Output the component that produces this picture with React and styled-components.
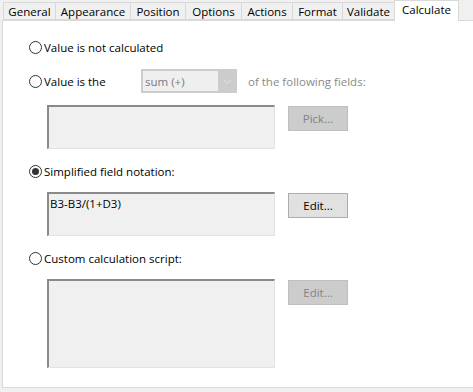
import React from 'react'
import styled, { createGlobalStyle } from 'styled-components'

const GlobalStyle = createGlobalStyle`
    html, body {
        margin: 0;
        padding: 0;
        background: #f0f0f0;
    }
    body {
        font-family: "Open Sans", "Noto Sans", sans-serif;
        font-size: 11.5px;
        color: #000;
    }
`;

const Window = styled.div`
    width: 473px;
    height: 392px;
    background: #f0f0f0;
    overflow: hidden;
`;

const TabBar = styled.div`
    display: flex;
    align-items: flex-end;
    height: 20px;
    padding-left: 3px;
    position: relative;
    z-index: 1;
`;

const Tab = styled.div`
    box-sizing: border-box;
    width: ${p => p.w}px;
    height: ${p => (p.active ? 21 : 18)}px;
    margin-left: -1px;
    margin-bottom: ${p => (p.active ? -1 : 0)}px;
    border: 1px solid #d9d9d9;
    border-bottom: ${p => (p.active ? 'none' : '1px solid #d9d9d9')};
    background: ${p => (p.active ? '#fff' : '#f0f0f0')};
    display: flex;
    justify-content: center;
    align-items: ${p => (p.active ? 'flex-start' : 'center')};
    padding-top: ${p => (p.active ? 1 : 0)}px;
    white-space: nowrap;
    &:first-child { margin-left: 0; }
`;

const Panel = styled.div`
    box-sizing: border-box;
    margin-left: 2px;
    height: 368px;
    background: #fff;
    border: 1px solid #d9d9d9;
    border-right: none;
    padding: 18px 0 0 26px;
    display: flex;
    flex-direction: column;
`;

const OptionRow = styled.label`
    display: flex;
    align-items: center;
    gap: 2px;
    height: ${p => p.h || 16}px;
    margin-top: ${p => p.mt || 0}px;
    white-space: nowrap;
`;

const Radio = styled.span`
    box-sizing: border-box;
    width: 13px;
    height: 13px;
    border: 1px solid #333;
    border-radius: 50%;
    background: #fff;
    display: flex;
    align-items: center;
    justify-content: center;
    &::after {
        content: '';
        width: 7px;
        height: 7px;
        border-radius: 50%;
        background: ${p => (p.checked ? '#333' : 'transparent')};
    }
`;

const Label = styled.span`
    width: ${p => (p.w ? `${p.w}px` : 'auto')};
`;

const Select = styled.div`
    box-sizing: border-box;
    width: 96px;
    height: 24px;
    border: 1px solid #cccccc;
    background: #cccccc;
    display: flex;
    align-items: stretch;
    padding: 1px 0 1px 1px;
`;

const SelectText = styled.div`
    flex: 1;
    background: #efefef;
    color: #7a7a7a;
    padding-left: 2px;
    display: flex;
    align-items: center;
`;

const SelectArrow = styled.div`
    width: 18px;
    display: flex;
    align-items: center;
    justify-content: center;
`;

const Hint = styled.span`
    margin-left: 9px;
    color: #8a8a8a;
`;

const FieldRow = styled.div`
    display: flex;
    align-items: flex-start;
    gap: 13px;
    margin-top: ${p => p.mt}px;
    margin-left: 18px;
`;

const Box = styled.div`
    box-sizing: border-box;
    width: 228px;
    height: ${p => p.h}px;
    background: #f0f0f0;
    border-top: 2px solid #8a8a8a;
    border-left: 2px solid #8a8a8a;
    border-right: 1px solid #e3e3e3;
    border-bottom: 1px solid #e3e3e3;
    padding: 2px 0 0 1px;
    line-height: 16px;
`;

const Button = styled.div`
    box-sizing: border-box;
    width: 60px;
    height: 25px;
    margin-top: 1px;
    border: 1px solid ${p => (p.disabled ? '#bfbfbf' : '#adadad')};
    background: ${p => (p.disabled ? '#cccccc' : '#e1e1e1')};
    color: ${p => (p.disabled ? '#838383' : '#000')};
    display: flex;
    align-items: center;
    justify-content: center;
`;

const tabs = [
    ['General', 53],
    ['Appearance', 76],
    ['Position', 56],
    ['Options', 57],
    ['Actions', 52],
    ['Format', 51],
    ['Validate', 53],
    ['Calculate', 65],
]

export default function App() {
    return (
        <Window>
            <GlobalStyle />
            <TabBar>
                {tabs.map(([name, w]) => (
                    <Tab key={name} w={w} active={name === 'Calculate'}>{name}</Tab>
                ))}
            </TabBar>

            <Panel>
                <OptionRow>
                    <Radio />
                    <Label>Value is not calculated</Label>
                </OptionRow>

                <OptionRow h={24} mt={14}>
                    <Radio />
                    <Label w={95}>Value is the</Label>
                    <Select>
                        <SelectText>sum (+)</SelectText>
                        <SelectArrow>
                            <svg width="9" height="5" viewBox="0 0 9 5">
                                <path d="M0.5 0.5 L4.5 4.5 L8.5 0.5" fill="none" stroke="#e2e2e2" strokeWidth="1" />
                            </svg>
                        </SelectArrow>
                    </Select>
                    <Hint>of the following fields:</Hint>
                </OptionRow>

                <FieldRow mt={12}>
                    <Box h={44} />
                    <Button disabled>Pick...</Button>
                </FieldRow>

                <OptionRow mt={14}>
                    <Radio checked />
                    <Label>Simplified field notation:</Label>
                </OptionRow>

                <FieldRow mt={13}>
                    <Box h={44}>B3-B3/(1+D3)</Box>
                    <Button>Edit...</Button>
                </FieldRow>

                <OptionRow mt={14}>
                    <Radio />
                    <Label>Custom calculation script:</Label>
                </OptionRow>

                <FieldRow mt={13}>
                    <Box h={89} />
                    <Button disabled>Edit...</Button>
                </FieldRow>
            </Panel>
        </Window>
    )
}
